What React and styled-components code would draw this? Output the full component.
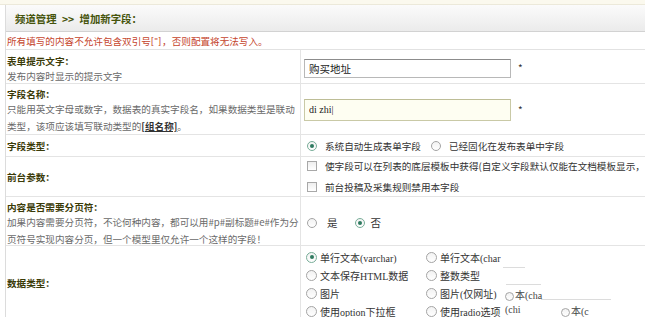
import React from 'react';
import styled, { createGlobalStyle } from 'styled-components';

const GlobalStyle = createGlobalStyle`
  * { box-sizing: border-box; }
  body {
    margin: 0;
    background: #fff;
    font-family: "Noto Sans CJK SC", "Liberation Sans", sans-serif;
    font-size: 9.6px;
    color: #333;
  }
`;

const Page = styled.div`
  width: 645px;
  height: 317px;
  overflow: hidden;
  background: #fff;
`;

const TopStrip = styled.div`
  height: 5px;
  background: #fbf9ee;
  border-bottom: 1px solid #ece9da;
`;

const Frame = styled.div`
  margin-left: 5px;
  border-left: 1px solid #dcdcdc;
`;

const Header = styled.div`
  height: 27px;
  display: flex;
  align-items: center;
  padding-left: 9px;
  background: linear-gradient(#fbfbfb, #ebebeb);
  border-bottom: 1px solid #d2d2d2;
  font-weight: bold;
  font-size: 10.4px;
  color: #46540c;
  white-space: nowrap;
  word-spacing: 3px;
`;

const Notice = styled.div`
  height: 18px;
  display: flex;
  align-items: center;
  padding-left: 1px;
  border-bottom: 1px solid #e2e2e2;
  color: #c5452c;
  white-space: nowrap;
`;

const Latin = styled.span`
  font-family: "Liberation Sans", sans-serif;
  font-size: 9px;
  letter-spacing: 1px;
`;

const Row = styled.div`
  display: grid;
  grid-template-columns: 295px 1fr;
  height: ${p => p.$h}px;
  border-bottom: 1px solid #e4e4e4;
`;

const LeftCell = styled.div`
  border-right: 1px solid #e4e4e4;
  padding: ${p => p.$pt || 0}px 1px 0;
  display: flex;
  flex-direction: column;
  justify-content: ${p => (p.$center ? 'center' : 'flex-start')};
`;

const Label = styled.div`
  font-weight: bold;
  color: #3b3b08;
  line-height: 14px;
  white-space: nowrap;
`;

const Desc = styled.div`
  color: #6a6a6a;
  line-height: 17px;
`;

const GroupLink = styled.span`
  color: #333;
  font-weight: bold;
  text-decoration: underline;
`;

const RightCell = styled.div`
  position: relative;
  padding-left: 3px;
  display: flex;
  flex-direction: ${p => (p.$column ? 'column' : 'row')};
  align-items: ${p => (p.$column ? 'flex-start' : 'center')};
  justify-content: ${p => (p.$top ? 'flex-start' : p.$column ? 'center' : 'flex-start')};
  white-space: nowrap;
  overflow: hidden;
`;

const TextInput = styled.input`
  width: 207px;
  height: ${p => (p.$focused ? 22 : 19)}px;
  margin: ${p => (p.$focused ? '0' : '2px 0 0')};
  padding: 0 4px;
  border: 1px solid ${p => (p.$focused ? '#c9c9a6' : '#b8b8b8')};
  border-top-color: ${p => (p.$focused ? '#bdbd96' : '#8c8c8c')};
  background: ${p => (p.$focused ? '#fefef2' : '#fff')};
  font-family: ${p => (p.$focused ? '"Liberation Serif", serif' : '"Noto Sans CJK SC", sans-serif')};
  font-size: ${p => (p.$focused ? 10 : 10.5)}px;
  color: #222;
  outline: none;
`;

const Star = styled.span`
  margin-left: 7px;
  color: #333;
  font-size: 10px;
`;

const Option = styled.label`
  display: inline-flex;
  align-items: center;
  gap: ${p => p.$gap ?? 8}px;
  margin-left: ${p => p.$ml ?? 0}px;
  margin-right: ${p => p.$mr ?? 0}px;
  font-size: ${p => p.$fs || 9.6}px;
  color: #333;
`;

const Radio = styled.span`
  position: relative;
  flex: none;
  width: ${p => p.$size || 10}px;
  height: ${p => p.$size || 10}px;
  border-radius: 50%;
  border: 1px solid ${p => (p.$checked ? '#78ad98' : '#a4a4a4')};
  background: linear-gradient(#f2f2f2, #fff);

  &::after {
    content: '';
    display: ${p => (p.$checked ? 'block' : 'none')};
    position: absolute;
    left: 50%;
    top: 50%;
    width: 4px;
    height: 4px;
    margin: -2px 0 0 -2px;
    border-radius: 50%;
    background: #2f7a60;
  }
`;

const Checkbox = styled.span`
  flex: none;
  width: 10px;
  height: 10px;
  border: 1px solid #a8a8a8;
  background: linear-gradient(#eeeeee, #fff);
`;

const CheckList = styled.div`
  display: flex;
  flex-direction: column;
  gap: 7px;
  padding-left: 3px;
`;

const TypeGrid = styled.div`
  display: grid;
  grid-template-columns: 120px 120px;
  grid-auto-rows: 18px;
  align-items: center;
  padding: 2px 0 0 2px;
  font-family: "Liberation Serif", "Noto Sans CJK SC", serif;
`;

const Ghost = styled.span`
  position: absolute;
  left: ${p => p.$x}px;
  top: ${p => p.$y}px;
  display: inline-flex;
  align-items: center;
  gap: 1px;
  font-family: "Liberation Serif", "Noto Sans CJK SC", serif;
  font-size: 10px;
  line-height: 12px;
  color: #444;
`;

const GhostLine = styled.span`
  position: absolute;
  left: ${p => p.$x}px;
  top: ${p => p.$y}px;
  width: ${p => p.$w}px;
  height: 1px;
  background: #dcdcdc;
`;

const dataTypes = [
  ['单行文本(varchar)', true],
  ['单行文本(char', false],
  ['文本保存HTML数据', false],
  ['整数类型', false],
  ['图片', false],
  ['图片(仅网址)', false],
  ['使用option下拉框', false],
  ['使用radio选项', false],
];

const App = () => {
  return (
    <Page>
      <GlobalStyle />
      <TopStrip />
      <Frame>
        <Header>频道管理 &gt;&gt; 增加新字段：</Header>
        <Notice>
          所有填写的内容不允许包含双引号<Latin>["]</Latin>，否则配置将无法写入。
        </Notice>

        <Row $h={34}>
          <LeftCell $pt={4}>
            <Label>表单提示文字：</Label>
            <Desc>发布内容时显示的提示文字</Desc>
          </LeftCell>
          <RightCell>
            <TextInput readOnly value="购买地址" />
            <Star>*</Star>
          </RightCell>
        </Row>

        <Row $h={51}>
          <LeftCell $pt={3}>
            <Label>字段名称：</Label>
            <Desc>只能用英文字母或数字，数据表的真实字段名，如果数据类型是联动</Desc>
            <Desc>
              类型，该项应该填写联动类型的<GroupLink>[组名称]</GroupLink>。
            </Desc>
          </LeftCell>
          <RightCell>
            <TextInput $focused readOnly value="di zhi|" />
            <Star>*</Star>
          </RightCell>
        </Row>

        <Row $h={22}>
          <LeftCell $center>
            <Label>字段类型：</Label>
          </LeftCell>
          <RightCell>
            <Option $ml={3} $mr={10}>
              <Radio $checked />
              系统自动生成表单字段
            </Option>
            <Option>
              <Radio />
              已经固化在发布表单中字段
            </Option>
          </RightCell>
        </Row>

        <Row $h={40}>
          <LeftCell $center>
            <Label>前台参数：</Label>
          </LeftCell>
          <RightCell $column>
            <CheckList>
              <Option>
                <Checkbox />
                使字段可以在列表的底层模板中获得(自定义字段默认仅能在文档模板显示，
              </Option>
              <Option>
                <Checkbox />
                前台投稿及采集规则禁用本字段
              </Option>
            </CheckList>
          </RightCell>
        </Row>

        <Row $h={49}>
          <LeftCell $pt={3}>
            <Label>内容是否需要分页符：</Label>
            <Desc>
              加果内容需要分页符，不论何种内容，都可以用#p#副标题#e#作为分页符号实现内容分页，但一个模型里仅允许一个这样的字段！
            </Desc>
          </LeftCell>
          <RightCell>
            <Option $ml={3} $gap={10} $mr={17} $fs={10.5}>
              <Radio />
              是
            </Option>
            <Option $gap={6} $fs={10.5}>
              <Radio $checked />
              否
            </Option>
          </RightCell>
        </Row>

        <Row $h={75}>
          <LeftCell $center>
            <Label>数据类型：</Label>
          </LeftCell>
          <RightCell $column $top>
            <TypeGrid>
              {dataTypes.map(([text, checked]) => (
                <Option key={text} $gap={3} $fs={10}>
                  <Radio $checked={checked} $size={11} />
                  {text}
                </Option>
              ))}
            </TypeGrid>
            <GhostLine $x={246} $y={-4} $w={50} />
            <GhostLine $x={202} $y={21} $w={22} />
            <GhostLine $x={205} $y={38} $w={35} />
            <GhostLine $x={240} $y={53} $w={70} />
            <Ghost $x={204} $y={44}>
              <Radio $size={9} />
              本(cha
            </Ghost>
            <Ghost $x={204} $y={58}>(chi</Ghost>
            <Ghost $x={260} $y={60}>
              <Radio $size={9} />
              本(c
            </Ghost>
          </RightCell>
        </Row>
      </Frame>
    </Page>
  );
};

export default App;
